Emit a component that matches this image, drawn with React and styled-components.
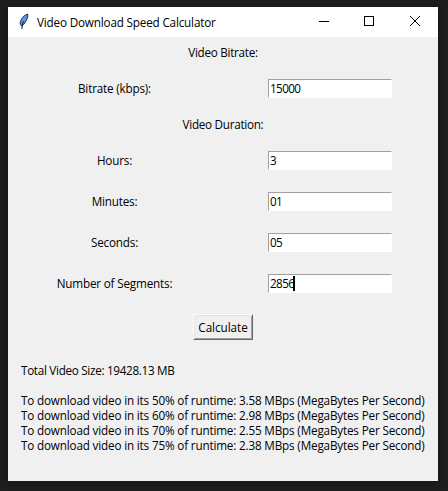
import React from "react";
import styled, { createGlobalStyle } from "styled-components";

const GlobalStyle = createGlobalStyle`
  * { box-sizing: border-box; }
  body { margin: 0; background: #1e1e1e; }
`;

const Desktop = styled.main`
  width: 448px;
  height: 491px;
  padding: 7px 10px 10px 8px;
  background: #1e1e1e;
  overflow: hidden;
`;

const Window = styled.section`
  width: 430px;
  height: 474px;
  background: #f0f0f0;
  color: #000;
  font: 11.7px/15px "Open Sans", "Noto Sans", sans-serif;
  box-shadow: 0 1px 7px 1px rgba(0, 0, 0, 0.3);
`;

const TitleBar = styled.header`
  display: flex;
  height: 30px;
  align-items: center;
  background: #fff;
`;

const AppIcon = styled.svg`
  width: 12px;
  height: 18px;
  margin: 0 7px 2px 10px;
  flex: none;
`;

const Text = styled.span`
  white-space: pre;
  letter-spacing: ${(p) => p.$track || 0}px;
`;

const Controls = styled.div`
  display: flex;
  margin-left: auto;
`;

const ControlButton = styled.button`
  display: flex;
  width: 46px;
  height: 30px;
  padding: 0 0 2px;
  align-items: center;
  justify-content: center;
  border: 0;
  background: transparent;
`;

const Heading = styled.div`
  height: 31px;
  padding-top: 8px;
  text-align: center;
`;

const Row = styled.div`
  display: grid;
  grid-template-columns: 213px 217px;
  height: 41px;
  align-items: center;
  justify-items: center;
`;

const Entry = styled.div`
  display: flex;
  width: 124px;
  height: 19px;
  margin-left: 1px;
  padding-left: 1px;
  align-items: center;
  background: #fff;
  border: 1px solid;
  border-color: #a0a0a0 #fff #fff #a0a0a0;
`;

const Caret = styled.i`
  width: 2px;
  height: 15px;
  margin-left: -1px;
  background: #000;
`;

const CalculateButton = styled.button`
  display: flex;
  width: 60px;
  height: 26px;
  margin: 10px 0 0 185px;
  padding: 0;
  align-items: center;
  justify-content: center;
  border: 1px solid;
  border-color: #fff #696969 #696969 #fff;
  box-shadow: inset 1px 1px #e3e3e3, inset -1px -1px #a0a0a0;
  background: #f0f0f0;
  color: #000;
  font: inherit;
`;

const Results = styled.div`
  display: flex;
  flex-direction: column;
  padding: 23px 0 0 13px;
`;

const Total = styled.div`
  margin-bottom: 15px;
`;

const durationFields = [
  { label: "Hours:", value: "3" },
  { label: "Minutes:", value: "01" },
  { label: "Seconds:", value: "05" },
  { label: "Number of Segments:", value: "2856", focused: true },
];

const speeds = [
  ["50", "3.58"],
  ["60", "2.98"],
  ["70", "2.55"],
  ["75", "2.38"],
];

function Field({ label, value, focused }) {
  return (
    <Row>
      <Text $track={-0.18}>{label}</Text>
      <Entry>
        <Text $track={-0.6}>{value}</Text>
        {focused && <Caret />}
      </Entry>
    </Row>
  );
}

export default function App() {
  return (
    <Desktop>
      <GlobalStyle />
      <Window>
        <TitleBar>
          <AppIcon viewBox="0 0 12 18">
            <path d="M9.500 2 6.500 3.500 3.500 7 2 11l1.500 3L6.500 11.500l2-3.500 1.500-4z" fill="#5c9ae6" stroke="#111c2c" strokeWidth=".9" />
            <path d="M5.500 9 4.800 11 3.800 17" fill="none" stroke="#16243a" />
          </AppIcon>
          <Text $track={-0.17}>Video Download Speed Calculator</Text>
          <Controls>
            <ControlButton aria-label="Minimize">
              <svg width="12" height="10" shapeRendering="crispEdges"><path d="M2 5.500h10" stroke="#000" /></svg>
            </ControlButton>
            <ControlButton aria-label="Maximize">
              <svg width="10" height="10" shapeRendering="crispEdges"><path d="M.5.5h9v9h-9z" fill="none" stroke="#000" /></svg>
            </ControlButton>
            <ControlButton aria-label="Close">
              <svg width="10" height="10"><path d="m0 0 10 10M10 0 0 10" stroke="#000" /></svg>
            </ControlButton>
          </Controls>
        </TitleBar>
        <Heading><Text $track={-0.28}>Video Bitrate:</Text></Heading>
        <Field label="Bitrate (kbps):" value="15000" />
        <Heading><Text $track={-0.28}>Video Duration:</Text></Heading>
        {durationFields.map((f) => <Field key={f.label} {...f} />)}
        <CalculateButton><Text $track={-0.05}>Calculate</Text></CalculateButton>
        <Results>
          <Total><Text $track={-0.3}>Total Video Size: 19428.13 MB</Text></Total>
          {speeds.map(([pct, rate]) => (
            <Text key={pct} $track={-0.165}>{`To download video in its ${pct}% of runtime: ${rate} MBps (MegaBytes Per Second)`}</Text>
          ))}
        </Results>
      </Window>
    </Desktop>
  );
}
